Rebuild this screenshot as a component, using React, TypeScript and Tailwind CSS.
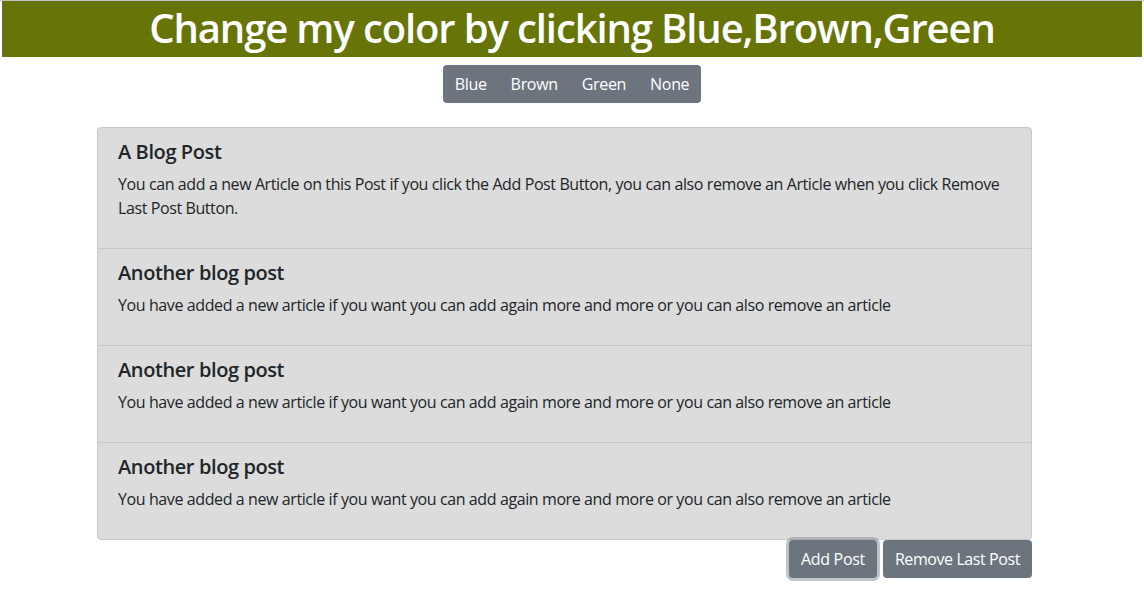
import { useState } from 'react'

const firstPost = {
  title: 'A Blog Post',
  body: 'You can add a new Article on this Post if you click the Add Post Button, you can also remove an Article when you click Remove Last Post Button.',
}

const extraPost = {
  title: 'Another blog post',
  body: 'You have added a new article if you want you can add again more and more or you can also remove an article',
}

const colors: Record<string, string> = {
  Blue: 'bg-[#1e40af]',
  Brown: 'bg-[#7c4a1e]',
  Green: 'bg-[#667408]',
  None: 'bg-[#667408]',
}

export default function App() {
  const [color, setColor] = useState('Green')
  const [posts, setPosts] = useState([firstPost, extraPost, extraPost, extraPost])

  return (
    <div className="min-h-[610px] bg-white text-[#212529]" style={{ fontFamily: '"Open Sans", "Noto Sans", sans-serif' }}>
      <div className="h-px bg-[#c4c4c4]" />
      <div className={`mx-[2px] h-[56px] flex items-center justify-center ${colors[color]}`}>
        <h1 className="text-[40px] leading-[48px] font-semibold text-white tracking-[-0.028em] -translate-y-px">
          Change my color by clicking Blue,Brown,Green
        </h1>
      </div>

      <div className="mt-2 flex justify-center">
        <div className="flex rounded bg-[#6c757d]">
          {['Blue', 'Brown', 'Green', 'None'].map((c) => (
            <button
              key={c}
              onClick={() => setColor(c)}
              className="px-3 py-[7px] text-base leading-6 text-white tracking-[-0.02em]"
            >
              {c}
            </button>
          ))}
        </div>
      </div>

      <div className="ml-[97px] mt-6 w-[935px]">
        <div className="rounded border border-[#c8c8c8] bg-[#dcdcdc]">
          {posts.map((p, i) => (
            <div
              key={i}
              className={`px-5 py-3 ${i > 0 ? 'border-t border-[#c8c8c8]' : ''}`}
            >
              <h5 className="mb-2 text-[20px] leading-6 font-semibold tracking-[-0.02em]">{p.title}</h5>
              <p className="mb-4 text-base leading-6 tracking-[-0.025em]">{p.body}</p>
            </div>
          ))}
        </div>
        <div className="flex justify-end gap-[6px]">
          <button
            onClick={() => setPosts([...posts, extraPost])}
            className="h-[38px] rounded bg-[#6c757d] px-3 text-base text-white tracking-[-0.02em] shadow-[0_0_0_3px_rgba(130,138,145,0.5)]"
          >
            Add Post
          </button>
          <button
            onClick={() => setPosts(posts.length > 1 ? posts.slice(0, -1) : posts)}
            className="h-[38px] rounded bg-[#6c757d] px-3 text-base text-white tracking-[-0.026em]"
          >
            Remove Last Post
          </button>
        </div>
      </div>
    </div>
  )
}
